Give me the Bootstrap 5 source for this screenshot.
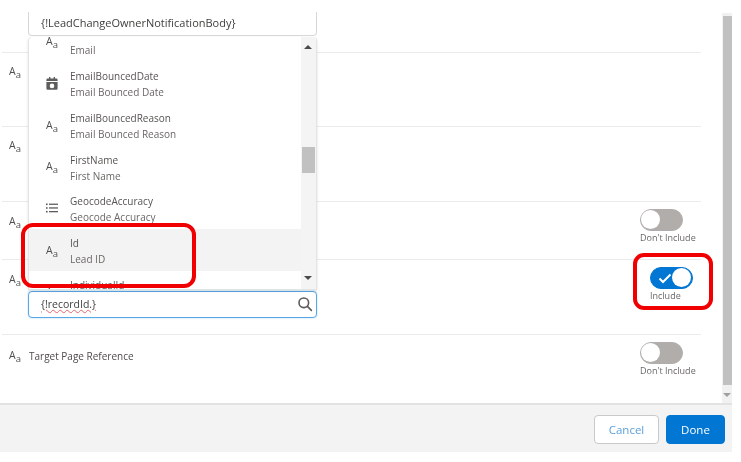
<!doctype html>
<html lang="en">
<head>
<meta charset="utf-8">
<link href="https://cdn.jsdelivr.net/npm/bootstrap@5.3.0/dist/css/bootstrap.min.css" rel="stylesheet">
<style>
html,body{background:#fff;margin:0;overflow:hidden}
body{font-family:"Open Sans","Liberation Sans",sans-serif;font-size:10px;color:#4e4c4a;line-height:1.2}
.shot{position:relative;width:732px;height:452px;filter:blur(.3px)}
.upper{height:403px}
.fields{width:722px;padding-left:2px}
.rowline{width:699px;border-bottom:1.5px solid #ebebeb;padding-right:8px;position:relative}
.rowline:last-child{border-bottom:0}
.r1{height:53px}.r2{height:74px}.r3{height:75px}.r4{height:58px}.r5{height:75px}.r6{height:68px}
.aa{font-size:10.5px;width:18px;margin-left:7px;flex:none;color:#514f4d;line-height:1}
.aa i{font-style:normal;font-size:9.5px;position:relative;top:3px;left:0}
.r2 .aa,.r3 .aa{margin-top:13px}
.r4 .aa,.r5 .aa{margin-top:14px}
.r6 .aa{margin-top:15px}
.fname{margin:15px 0 0 2px;font-size:10px}
.inp{position:absolute;left:26px;width:289px;height:24px;background:#fff;border:1px solid #d8d8d8;border-radius:4px;padding:0 12px 1px;color:#3e3e3c;font-size:11px}
.inp.one{top:12px;border-top:0;border-radius:0 0 4px 4px}
.inp.two{top:31px;height:27px;border:1.5px solid #5aa7e6;box-shadow:0 0 2px #a9d3f5;justify-content:space-between;padding-right:3px;font-size:10.5px}
.squig{text-decoration:underline wavy #e8646a;text-decoration-thickness:.6px;text-underline-offset:1px}
.dropbox{position:absolute;left:28px;top:37px;width:289px;height:253px;background:#fff;border:1px solid #e4e4e4;border-top:0;border-radius:4px 4px 0 0;box-shadow:0 1px 3px rgba(0,0,0,.12);overflow:hidden;z-index:2}
.opts{margin-top:-16.5px}
.opt{height:41.75px;padding-left:17px;gap:12px}
.opt.hover{background:#f3f3f3}
.ic{width:12px;flex:none;display:flex;justify-content:flex-start;color:#514f4d}
.ic .aa{width:12px;white-space:nowrap}
.tl{line-height:16px;color:#565452;padding-top:2px}
.tl div+div{color:#6a6866}
.gap-line{height:16px}
.lbar{position:absolute;right:0;top:0;bottom:0;width:15px;background:#f4f4f4}
.lthumb{position:absolute;left:1px;right:1px;top:110px;height:26px;background:#c1c1c1}
.arr{position:absolute;left:3px;width:0;height:0;border-left:4px solid transparent;border-right:4px solid transparent}
.arr.u{top:8px;border-bottom:4px solid #4a4a4a}
.arr.d{bottom:9px;border-top:4px solid #4a4a4a}
.sw{width:43px;height:22px;border-radius:11px;background:#b0adab;border:1.5px solid #b0adab;position:relative;display:block}
.sw::after{content:"";position:absolute;left:0;top:0;width:19px;height:19px;border-radius:50%;background:#fff}
.sw.on{background:#0176d3;border-color:#0176d3}
.sw.on::after{left:21px}
.sw svg{position:absolute;left:7px;top:5px}
.swbox{position:absolute;top:7px;left:638px;width:56px}
.swbox.onbox{left:648px;width:44px}
.swlab{font-size:9px;margin-top:2px;color:#6a6866;white-space:nowrap}
.mainbar{width:10px;margin-top:13px;background:#f1f1f1;position:relative}
.mainthumb{position:absolute;left:1px;right:0;top:3px;height:369px;background:#c1c1c1}
.mainarr{position:absolute;left:1px;bottom:6px;width:0;height:0;border-left:4px solid transparent;border-right:4px solid transparent;border-top:4px solid #a0a0a0}
.foot{height:49px;background:#f3f3f3;border-top:2px solid #e2e2e2;padding:10px 7px 0 0;gap:7px}
.bt{height:29px;font-size:11.5px;border-radius:4px;padding:0;line-height:27px}
.bt.c{width:65px;background:#fff;border:1px solid #c9c9c9;color:#5a9fdc}
.bt.d{width:59px;background:#0176d3;border:1px solid #0176d3;color:#fff}
.redmark{position:absolute;border:4px solid #f00000;pointer-events:none;z-index:3}
.m1{left:21px;top:223px;width:175px;height:65px;border-radius:12px}
.m2{left:633px;top:253px;width:80px;height:57px;border-radius:11px}
</style>
</head>
<body>
<div class="shot">
  <div class="upper d-flex">
    <div class="fields">
      <div class="rowline r1"><div class="inp one d-flex align-items-center">{!LeadChangeOwnerNotificationBody}</div></div>
      <div class="rowline r2 d-flex"><span class="aa">A<i>a</i></span></div>
      <div class="rowline r3 d-flex"><span class="aa">A<i>a</i></span></div>
      <div class="rowline r4 d-flex"><span class="aa">A<i>a</i></span>
        <div class="swbox"><span class="sw"></span><div class="swlab">Don't Include</div></div></div>
      <div class="rowline r5 d-flex"><span class="aa">A<i>a</i></span>
        <div class="inp two d-flex align-items-center"><span class="squig">{!recordId.}</span>
          <svg width="16" height="16" viewBox="0 0 16 16" fill="none" stroke="#5c5a58" stroke-width="1.6"><circle cx="6.8" cy="6.8" r="4.8"/><path d="M10.4 10.4l4 4" stroke-linecap="round"/></svg></div>
        <div class="swbox onbox"><span class="sw on"><svg width="14" height="11" viewBox="0 0 14 11" fill="none" stroke="#fff" stroke-width="2"><path d="M1.5 5.5l3.5 3.5 7.5-7.5"/></svg></span><div class="swlab">Include</div></div></div>
      <div class="rowline r6 d-flex"><span class="aa">A<i>a</i></span><span class="fname">Target Page Reference</span>
        <div class="swbox"><span class="sw"></span><div class="swlab">Don't Include</div></div></div>
    </div>
    <div class="mainbar"><div class="mainthumb"></div><div class="mainarr"></div></div>
  </div>
  <div class="dropbox">
    <div class="opts">
      <div class="opt d-flex align-items-center"><span class="ic"><span class="aa m-0">A<i>a</i></span></span><div class="tl"><div class="gap-line"></div><div>Email</div></div></div>
      <div class="opt d-flex align-items-center"><span class="ic"><svg width="12" height="13" viewBox="0 0 12 13" fill="#5f5d5b"><path d="M3 0h1.400v1.600h3.200V0H9v1.600h1.400a1.200 1.200 0 0 1 1.200 1.200V4H.4V2.800a1.200 1.200 0 0 1 1.200-1.200H3zM.4 5h11.200v6.500a1.200 1.200 0 0 1-1.200 1.200H1.600a1.200 1.200 0 0 1-1.200-1.200zM6 6.600a2.300 2.300 0 1 0 0 4.600 2.300 2.300 0 0 0 0-4.600z"/></svg></span><div class="tl"><div>EmailBouncedDate</div><div>Email Bounced Date</div></div></div>
      <div class="opt d-flex align-items-center"><span class="ic"><span class="aa m-0">A<i>a</i></span></span><div class="tl"><div>EmailBouncedReason</div><div>Email Bounced Reason</div></div></div>
      <div class="opt d-flex align-items-center"><span class="ic"><span class="aa m-0">A<i>a</i></span></span><div class="tl"><div>FirstName</div><div>First Name</div></div></div>
      <div class="opt d-flex align-items-center"><span class="ic"><svg width="12" height="10" viewBox="0 0 12 10" fill="#5f5d5b"><rect x="0" y=".5" width="1.600" height="1.600"/><rect x="3" y=".6" width="9" height="1.300"/><rect x="0" y="4.200" width="1.600" height="1.600"/><rect x="3" y="4.300" width="9" height="1.300"/><rect x="0" y="7.900" width="1.600" height="1.600"/><rect x="3" y="8" width="9" height="1.300"/></svg></span><div class="tl"><div>GeocodeAccuracy</div><div>Geocode Accuracy</div></div></div>
      <div class="opt hover d-flex align-items-center"><span class="ic"><span class="aa m-0">A<i>a</i></span></span><div class="tl"><div>Id</div><div>Lead ID</div></div></div>
      <div class="opt d-flex align-items-center"><span class="ic"><span class="aa m-0">A<i>a</i></span></span><div class="tl"><div>IndividualId</div><div>Individual ID</div></div></div>
    </div>
    <div class="lbar"><div class="arr u"></div><div class="lthumb"></div><div class="arr d"></div></div>
  </div>
  <div class="foot d-flex justify-content-end">
    <button type="button" class="btn bt c">Cancel</button>
    <button type="button" class="btn bt d">Done</button>
  </div>
  <div class="redmark m1"></div>
  <div class="redmark m2"></div>
</div>
<script src="https://cdn.jsdelivr.net/npm/bootstrap@5.3.0/dist/js/bootstrap.bundle.min.js"></script>
</body>
</html>
